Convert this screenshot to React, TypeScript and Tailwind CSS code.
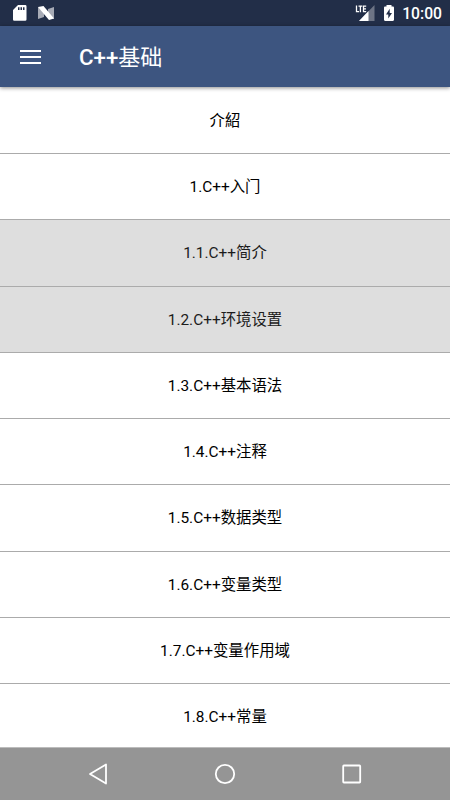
import { useState } from "react";

const chapters = [
    "介紹",
    "1.C++入门",
    "1.1.C++简介",
    "1.2.C++环境设置",
    "1.3.C++基本语法",
    "1.4.C++注释",
    "1.5.C++数据类型",
    "1.6.C++变量类型",
    "1.7.C++变量作用域",
    "1.8.C++常量",
];

function StatusBar() {
    return (
        <div className="flex h-[26px] shrink-0 items-center justify-between bg-[#222e48] pl-[13px] pr-[9px] text-white">
            <div className="flex items-center gap-[11px]">
                <svg className="h-4 w-3.5" viewBox="0 0 14 16">
                    <path
                        fill="#fff"
                        fillRule="evenodd"
                        d="M5 0h7.2a1.3 1.3 0 0 1 1.3 1.3v13.2a1.3 1.3 0 0 1-1.3 1.3H1.3A1.3 1.3 0 0 1 0 14.500V5zM5 2.300v2.700h1.500V2.300zm2.500 0v2.700H9V2.300zm2.500 0v2.700h1.500V2.300z"
                    />
                </svg>
                <svg className="h-3.5 w-4" viewBox="0 0 16 14">
                    <path fill="#a7abb6" d="M0 1 6 3v8L0 13zM16 1l-6 2v8l6 2z" />
                    <path fill="#fff" d="M0 1 5.500 0 16 12.500 11 14z" />
                </svg>
            </div>
            <div className="flex items-center">
                <svg className="mr-[9px] h-4 w-5" viewBox="0 0 20 16">
                    <path fill="#6d7485" d="M19.500 0v16H4z" />
                    <path fill="#fff" d="M13.500 6v10H4z" />
                    <path fill="#222e48" d="M0 0h11.500v8H0z" />
                    <path
                        fill="none"
                        stroke="#fff"
                        strokeWidth="1.3"
                        d="M1.500.500v6.200h2.500M3.500 1.100h3.800M5.400 1.100v6.200M11.200 1.100H8.500v5.500h2.700M8.500 3.800H11"
                    />
                </svg>
                <svg className="mr-[8px] h-4 w-2.5" viewBox="0 0 10 16">
                    <path
                        fill="#fff"
                        d="M2.500 0h5v1.600h1.300c.7 0 1.200.5 1.200 1.200v12c0 .7-.5 1.200-1.200 1.200H1.200C.5 16 0 15.500 0 14.800v-12c0-.7.5-1.200 1.200-1.200h1.300z"
                    />
                    <path fill="#222e48" d="M5.700 3.800 2 9.500h2.300v4L8 7.900H5.700z" />
                </svg>
                <span className="-mr-px pt-0.5 text-[15.700px] font-medium leading-6">10:00</span>
            </div>
        </div>
    );
}

function AppBar() {
    return (
        <header className="relative z-10 flex h-[61px] shrink-0 items-center bg-[#3d5580] pl-5 text-white shadow-[0_1px_4px_rgba(0,0,0,0.45)]">
            <button className="flex w-[21px] flex-col gap-1" aria-label="Menu">
                <span className="h-0.5 w-full bg-white" />
                <span className="h-0.5 w-full bg-white" />
                <span className="h-0.5 w-full bg-white" />
            </button>
            <h1 className="ml-[38px] pt-0.5 text-[22.300px] font-medium leading-[30px]">
                C++<span className="text-[22px] font-normal">基础</span>
            </h1>
        </header>
    );
}

function NavigationBar() {
    return (
        <nav className="z-10 flex h-[53px] shrink-0 items-center justify-between border-t border-[#bcbcbc] bg-[#959595] px-[88px]">
            <svg className="h-[22px] w-5" viewBox="0 0 20 22" fill="none" stroke="#fff" strokeWidth="1.8">
                <path strokeLinejoin="round" d="M18 1.500v19L2 11z" />
            </svg>
            <svg className="h-[22px] w-[22px]" viewBox="0 0 22 22" fill="none" stroke="#fff" strokeWidth="1.8">
                <circle cx="11" cy="11" r="9.200" />
            </svg>
            <svg className="h-[22px] w-5" viewBox="0 0 20 22" fill="none" stroke="#fff" strokeWidth="1.8">
                <rect x="1.200" y="2.500" width="17" height="17" rx=".7" />
            </svg>
        </nav>
    );
}

export default function App() {
    const [selected, setSelected] = useState<number[]>([2, 3]);

    const toggle = (index: number) => {
        setSelected((prev) =>
            prev.includes(index) ? prev.filter((i) => i !== index) : [...prev, index]
        );
    };

    return (
        <div className="flex h-screen flex-col overflow-hidden bg-white font-[Roboto,'Noto_Sans_CJK_SC',sans-serif]">
            <StatusBar />
            <AppBar />
            <ul className="min-h-0 flex-1 overflow-hidden pt-[0.75px]">
                {chapters.map((chapter, index) => (
                    <li
                        key={chapter}
                        onClick={() => toggle(index)}
                        className={`flex h-[66.25px] items-center justify-center border-b border-[#ababab] pt-0.5 text-[15.400px] ${
                            selected.includes(index) ? "bg-[#dedede] text-[#1c1c1c]" : "bg-white text-black"
                        }`}
                    >
                        {chapter}
                    </li>
                ))}
            </ul>
            <NavigationBar />
        </div>
    );
}
